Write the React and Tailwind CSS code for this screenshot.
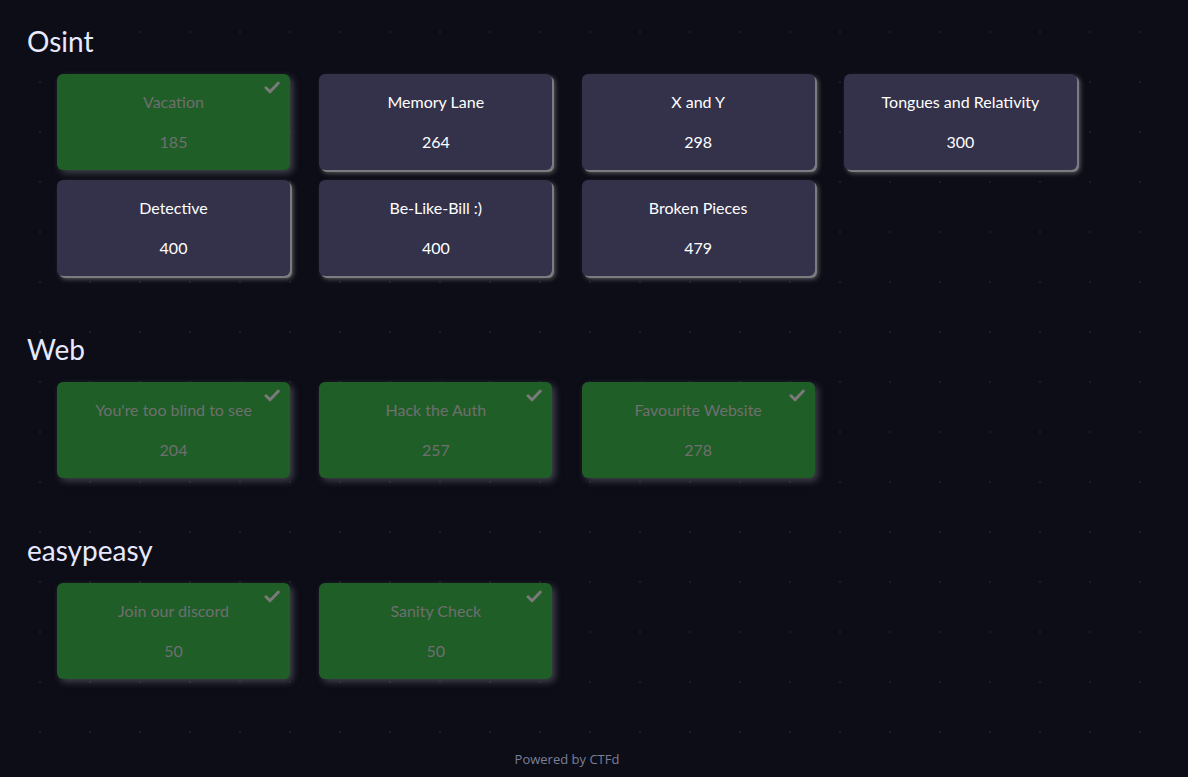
const categories = [
  {
    name: "Osint",
    challenges: [
      { name: "Vacation", value: 185, solved: true },
      { name: "Memory Lane", value: 264 },
      { name: "X and Y", value: 298 },
      { name: "Tongues and Relativity", value: 300 },
      { name: "Detective", value: 400 },
      { name: "Be-Like-Bill :)", value: 400 },
      { name: "Broken Pieces", value: 479 },
    ],
  },
  {
    name: "Web",
    challenges: [
      { name: "You're too blind to see", value: 204, solved: true },
      { name: "Hack the Auth", value: 257, solved: true },
      { name: "Favourite Website", value: 278, solved: true },
    ],
  },
  {
    name: "easypeasy",
    challenges: [
      { name: "Join our discord", value: 50, solved: true },
      { name: "Sanity Check", value: 50, solved: true },
    ],
  },
];

function Check() {
  return (
    <svg className="absolute right-[10px] top-[7px] h-[13px] w-[16px]" viewBox="0 0 16 13" fill="none">
      <path d="M2 6.8l4 4L14.2 2.2" stroke="#7a7a7a" strokeWidth="3" strokeLinecap="round" strokeLinejoin="round" />
    </svg>
  );
}

function ChallengeCard({ challenge }) {
  const solved = challenge.solved;
  return (
    <button
      className={`relative flex h-[96px] w-[233px] flex-col items-center rounded-[6px] pt-[17px] text-[16px] ${
        solved
          ? "bg-[#1f5e27] text-[#6f6f6f] shadow-[3px_3px_7px_rgba(120,120,130,0.5)]"
          : "bg-[#33324a] text-white shadow-[2px_2px_0_#7c7c80,3px_3px_5px_rgba(150,150,150,0.6)]"
      }`}
    >
      {solved && <Check />}
      <span className="leading-[22px]">{challenge.name}</span>
      <span className="mt-[18px] leading-[22px]">{challenge.value}</span>
    </button>
  );
}

export default function App() {
  return (
    <div className="min-h-[777px] bg-[#0d0d17] bg-[radial-gradient(circle,#1c1c28_1px,transparent_1.5px)] bg-[size:50px_50px] bg-[position:15px_7px] font-['Lato',sans-serif]">
      <main className="px-[27px] pt-[22px]">
        {categories.map((cat, i) => (
          <section key={cat.name} className={i === 0 ? "" : i === 1 ? "mt-[54px]" : "mt-[53px]"}>
            <h3 className="text-[28px] leading-[38px] text-[#e6e9ff]">{cat.name}</h3>
            <div className="mt-[14px] grid grid-cols-[repeat(4,233px)] gap-x-[29.3px] gap-y-[10px] pl-[30px]">
              {cat.challenges.map((ch) => (
                <ChallengeCard key={ch.name} challenge={ch} />
              ))}
            </div>
          </section>
        ))}
      </main>
      <footer className="mt-[71px] pr-[54px] text-center font-['Open_Sans',sans-serif] text-[13px] leading-[18px] text-[#7b7f97]">
        Powered by CTFd
      </footer>
    </div>
  );
}
